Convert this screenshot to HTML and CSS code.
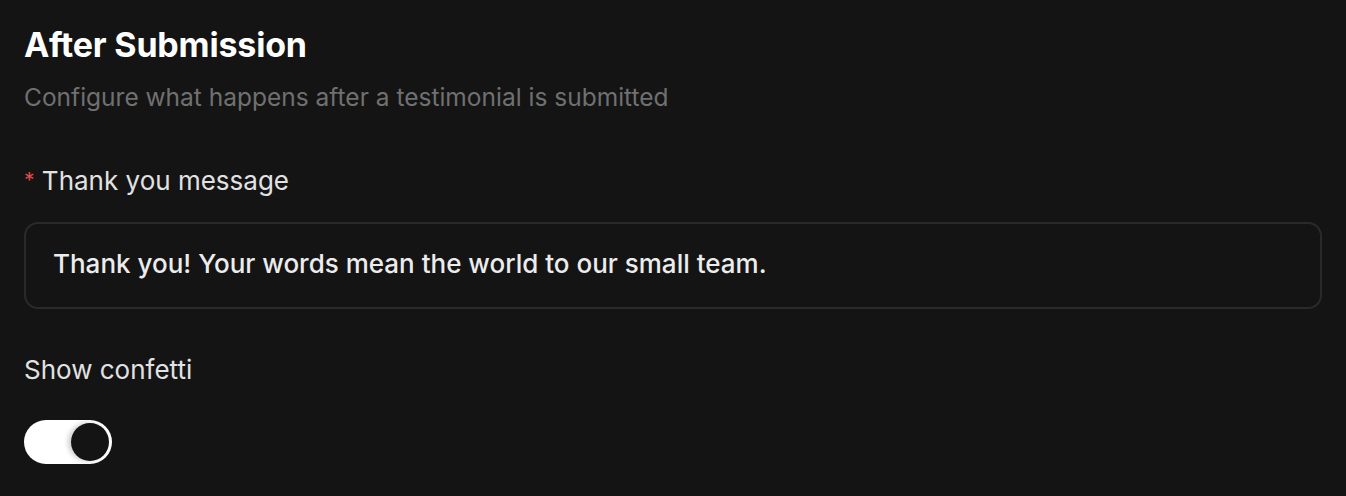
FILE: index.html
```html
<!DOCTYPE html>
<html>
<head>
<meta charset="utf-8">
<link rel="stylesheet" href="styles.css">
</head>
<body>
<main class="panel">
  <header class="head">
    <h1 class="title">After Submission</h1>
    <p class="subtitle">Configure what happens after a testimonial is submitted</p>
  </header>
  <div class="field field-message">
    <label class="label"><span class="req">*</span> Thank you message</label>
    <div class="input">Thank you! Your words mean the world to our small team.</div>
  </div>
  <div class="field field-confetti">
    <span class="label">Show confetti</span>
    <div class="toggle"><span class="knob"></span></div>
  </div>
</main>
</body>
</html>
```
FILE: styles.css
```css
html, body {
  margin: 0;
  padding: 0;
  background: #141414;
}
body {
  font-family: Inter, "Noto Sans", sans-serif;
  color: #e6e6e6;
}
.panel {
  padding: 25px 24px 0 24px;
  display: flex;
  flex-direction: column;
}
.head {
  display: flex;
  flex-direction: column;
  gap: 17px;
}
.title {
  margin: 0;
  font-size: 34px;
  font-weight: 700;
  line-height: 40px;
  color: #ffffff;
  letter-spacing: -0.2px;
}
.subtitle {
  margin: 0;
  font-size: 24.5px;
  line-height: 30px;
  color: #707070;
}
.field {
  display: flex;
  flex-direction: column;
}
.field-message {
  margin-top: 53px;
  gap: 25px;
}
.field-confetti {
  margin-top: 45px;
  gap: 34px;
}
.label {
  font-size: 26px;
  line-height: 32px;
  color: #e2e2e2;
}
.req {
  color: #e5484d;
  font-size: 21px;
  vertical-align: 2px;
}
.input {
  height: 87px;
  box-sizing: border-box;
  border: 2px solid #2a2a2a;
  border-radius: 14px;
  padding: 0 27px 3px 27px;
  display: flex;
  align-items: center;
  font-size: 26px;
  line-height: 32px;
  font-weight: 500;
  color: #ececec;
}
.toggle {
  width: 88px;
  height: 44px;
  border-radius: 22px;
  background: #ffffff;
  display: flex;
  align-items: center;
  justify-content: flex-end;
  padding: 3px;
  box-sizing: border-box;
}
.knob {
  width: 38px;
  height: 38px;
  border-radius: 50%;
  background: #141414;
  box-shadow: -3px 0 5px rgba(0,0,0,0.2);
}
```
